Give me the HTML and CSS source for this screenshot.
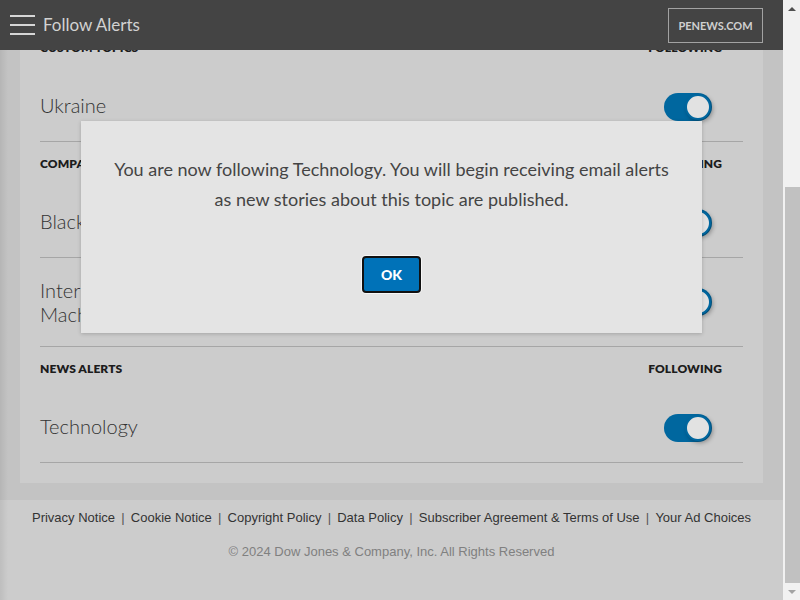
FILE: index.html
```html
<!DOCTYPE html>
<html lang="en">
<head>
<meta charset="utf-8">
<title>Follow Alerts</title>
<link rel="stylesheet" href="styles.css">
</head>
<body>
<div class="app">
  <div class="viewport">
    <header class="topbar">
      <button class="menu" aria-label="Menu"><span></span><span></span><span></span></button>
      <h1 class="title">Follow Alerts</h1>
      <a class="site">PENEWS.COM</a>
    </header>

    <main class="page">
      <section class="card">
        <div class="group">
          <div class="group-head"><span>CUSTOM TOPICS</span><span>FOLLOWING</span></div>
          <div class="row"><span class="name">Ukraine</span><span class="toggle"><span class="knob"></span></span></div>
        </div>
        <div class="group">
          <div class="group-head"><span>COMPANIES</span><span>FOLLOWING</span></div>
          <div class="row"><span class="name">BlackRock</span><span class="toggle"><span class="knob"></span></span></div>
          <div class="row"><span class="name">International Business Machines</span><span class="toggle"><span class="knob"></span></span></div>
        </div>
        <div class="group">
          <div class="group-head"><span>NEWS ALERTS</span><span>FOLLOWING</span></div>
          <div class="row"><span class="name">Technology</span><span class="toggle"><span class="knob"></span></span></div>
        </div>
      </section>
    </main>

    <footer class="footer">
      <nav class="links">
        <a>Privacy Notice</a><span class="sep">|</span>
        <a>Cookie Notice</a><span class="sep">|</span>
        <a>Copyright Policy</a><span class="sep">|</span>
        <a>Data Policy</a><span class="sep">|</span>
        <a>Subscriber Agreement &amp; Terms of Use</a><span class="sep">|</span>
        <a>Your Ad Choices</a>
      </nav>
      <p class="copy">© 2024 Dow Jones &amp; Company, Inc. All Rights Reserved</p>
    </footer>

    <div class="modal" role="dialog">
      <p class="modal-text">You are now following Technology. You will begin receiving email alerts as new stories about this topic are published.</p>
      <button class="ok">OK</button>
    </div>
  </div>

  <div class="scrollbar">
    <div class="sb-btn"><span class="arrow-up"></span></div>
    <div class="sb-track"><div class="sb-thumb"></div></div>
    <div class="sb-btn"><span class="arrow-down"></span></div>
  </div>
</div>
</body>
</html>
```

FILE: styles.css
```css
* { box-sizing: border-box; }

html, body {
  margin: 0;
  height: 100%;
}

body {
  font-family: Lato, "Liberation Sans", sans-serif;
  background: #c3c3c3;
}

.app {
  display: flex;
  height: 100vh;
  overflow: hidden;
}

.viewport {
  flex: 1;
  position: relative;
  display: flex;
  flex-direction: column;
  background: #c3c3c3;
  overflow: hidden;
}

.viewport::before {
  content: "";
  position: absolute;
  left: 0;
  top: 0;
  bottom: 0;
  width: 8px;
  background: linear-gradient(to right, rgba(0,0,0,0.07), rgba(0,0,0,0));
  z-index: 2;
}

/* header */
.topbar {
  position: absolute;
  top: 0;
  left: 0;
  right: 0;
  height: 50px;
  background: #444444;
  display: flex;
  align-items: center;
  padding: 0 20px 0 10px;
  z-index: 3;
}

.menu {
  width: 25px;
  height: 20px;
  padding: 0;
  border: 0;
  background: none;
  display: flex;
  flex-direction: column;
  justify-content: space-between;
}

.menu span {
  display: block;
  height: 2px;
  width: 25px;
  background: #d6d6d6;
}

.title {
  margin: 0 0 0 8px;
  font-size: 17px;
  font-weight: 400;
  color: #d2d2d2;
  line-height: 20px;
}

.site {
  margin-left: auto;
  width: 95px;
  height: 35px;
  border: 1px solid #a2a2a2;
  display: flex;
  align-items: center;
  justify-content: center;
  color: #d0d0d0;
  font-size: 11px;
  font-weight: 700;
}

/* content */
.page {
  padding: 0 20px 17px;
}

.card {
  background: #cccccc;
  padding: 26px 20px 20px;
}

.group-head {
  display: flex;
  justify-content: space-between;
  padding: 14px 21px 17px 0;
  font-size: 12px;
  font-weight: 800;
  line-height: 16px;
  letter-spacing: 0.1px;
  color: #1c1c1c;
}

.row {
  display: flex;
  align-items: flex-start;
  justify-content: space-between;
  padding: 20px 31px 20px 0;
  border-bottom: 1px solid #a6a6a6;
}

.name {
  font-size: 20px;
  font-weight: 300;
  line-height: 24px;
  color: #333;
  max-width: 250px;
}

.toggle {
  align-self: center;
  width: 48px;
  height: 28px;
  border-radius: 14px;
  background: #00679f;
  display: flex;
  align-items: center;
  justify-content: flex-end;
  padding-right: 1px;
}

.knob {
  width: 26px;
  height: 26px;
  border-radius: 50%;
  background: #e2e2e2;
  border: 2px solid #00679f;
  box-shadow: 2px 2px 4px rgba(0,0,0,0.3);
}

/* footer */
.footer {
  flex: 1;
  background: #cccccc;
  padding-top: 10px;
  font-family: "Liberation Sans", Arial, sans-serif;
  font-size: 13px;
}

.links {
  display: flex;
  justify-content: center;
  line-height: 16px;
  color: #333;
}

.sep {
  padding: 0 6.2px;
  color: #555;
}

.copy {
  margin: 18px 0 0;
  text-align: center;
  line-height: 16px;
  color: #808080;
}

/* modal */
.modal {
  position: absolute;
  top: 121px;
  left: 0;
  right: 0;
  margin: 0 auto;
  width: 621px;
  background: #e4e4e4;
  box-shadow: 0 1px 4px rgba(0,0,0,0.2);
  padding: 33px 24px 40px;
  text-align: center;
  z-index: 4;
}

.modal-text {
  margin: 0;
  font-size: 18px;
  line-height: 30px;
  color: #444;
}

.ok {
  margin-top: 42px;
  width: 59px;
  height: 37px;
  background: #0072b8;
  color: #fff;
  border: 2px solid #111;
  border-radius: 4px;
  box-shadow: 0 0 0 1px rgba(255,255,255,0.7);
  font-family: Lato, sans-serif;
  font-size: 14px;
  font-weight: 900;
}

/* scrollbar */
.scrollbar {
  width: 17px;
  background: #f1f1f1;
  display: flex;
  flex-direction: column;
}

.sb-btn {
  height: 17px;
  display: flex;
  align-items: center;
  justify-content: center;
}

.arrow-up {
  width: 0;
  height: 0;
  border-left: 4px solid transparent;
  border-right: 4px solid transparent;
  border-bottom: 4px solid #505050;
}

.arrow-down {
  width: 0;
  height: 0;
  border-left: 4px solid transparent;
  border-right: 4px solid transparent;
  border-top: 4px solid #a3a3a3;
}

.sb-track {
  flex: 1;
  display: flex;
  flex-direction: column;
  justify-content: flex-end;
}

.sb-thumb {
  height: 396px;
  margin-left: 2px;
  background: #c1c1c1;
}
```
